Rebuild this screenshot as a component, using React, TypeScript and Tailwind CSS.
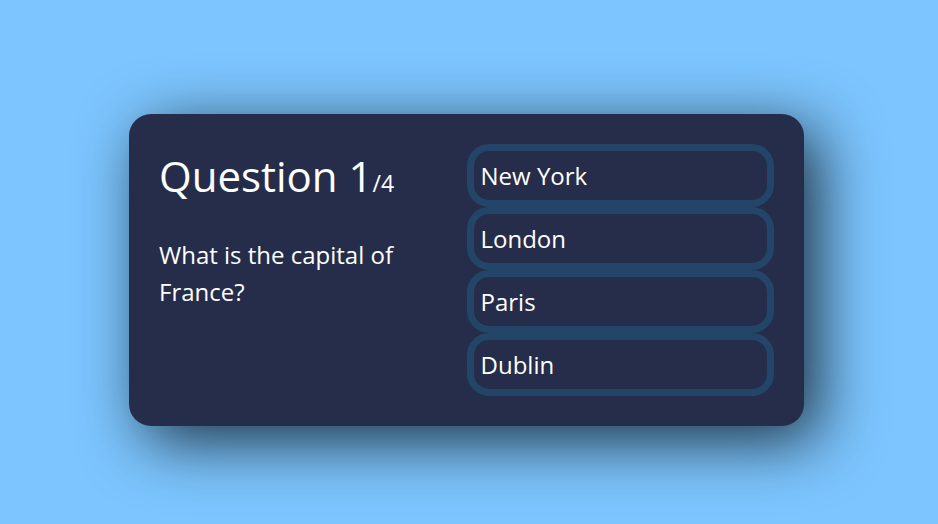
const answers = ["New York", "London", "Paris", "Dublin"];

export default function App() {
  return (
    <div
      className="flex h-[524px] w-full items-center justify-center bg-[#7cc5fe] pt-[16px] pr-[5px] text-white"
      style={{ fontFamily: '"Open Sans", sans-serif' }}
    >
      <div className="flex w-[675px] min-h-[312px] justify-evenly rounded-[22px] bg-[#252d4a] p-[30px] shadow-[15px_15px_63px_0px_rgba(0,0,0,0.75)]">
        <div className="w-full">
          <div className="mb-[29px] text-[23px]">
            <span className="text-[42px]">Question 1</span>/4
          </div>
          <div className="mb-[18px] pr-[20px] text-[24px] leading-[37px]">
            What is the capital of France?
          </div>
        </div>
        <div className="flex w-full flex-col justify-between">
          {answers.map((a) => (
            <button
              key={a}
              className="flex w-full items-center justify-start rounded-[22px] border-[7px] border-[#234668] bg-[#252d4a] p-[7px] text-[24px] leading-[35px] text-white"
            >
              {a}
            </button>
          ))}
        </div>
      </div>
    </div>
  );
}
